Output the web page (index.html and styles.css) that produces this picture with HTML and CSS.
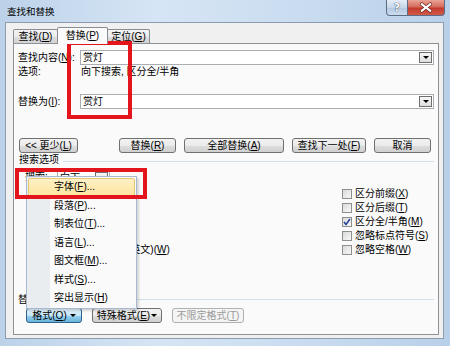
FILE: index.html
```html
<!DOCTYPE html>
<html lang="zh-CN">
<head>
    <meta charset="UTF-8">
    <title>查找和替换</title>
    <link rel="stylesheet" href="styles.css">
</head>
<body>
    <div class="window">
        <div class="titlebar">
            <span class="title">查找和替换</span>
            <div class="caption-buttons">
                <span class="cap-btn help">?</span>
                <span class="cap-btn close">
                    <svg width="37" height="16" viewBox="0 0 37 16">
                        <path d="M14 4 L23 11 M23 4 L14 11" stroke="#6b2118" stroke-width="3.6" stroke-linecap="round"/>
                        <path d="M14 4 L23 11 M23 4 L14 11" stroke="#fff" stroke-width="2.2" stroke-linecap="round"/>
                    </svg>
                </span>
            </div>
        </div>

        <div class="client">
            <div class="tabs">
                <div class="tab tab-find"><span>查找(<u>D</u>)</span></div>
                <div class="tab active"><span>替换(<u>P</u>)</span></div>
                <div class="tab tab-goto"><span>定位(<u>G</u>)</span></div>
            </div>

            <div class="panel">
                <div class="field-row find-row">
                    <span class="field-label">查找内容(<u>N</u>):</span>
                    <div class="combo">
                        <span class="combo-text">赏灯</span>
                        <span class="combo-btn"><i class="tri"></i></span>
                    </div>
                </div>
                <div class="info-row">
                    <span class="info-label">选项:</span>
                    <span>向下搜索, 区分全/半角</span>
                </div>
                <div class="field-row replace-row">
                    <span class="field-label">替换为(<u>I</u>):</span>
                    <div class="combo">
                        <span class="combo-text">赏灯</span>
                        <span class="combo-btn"><i class="tri"></i></span>
                    </div>
                </div>

                <div class="button-row">
                    <span class="btn btn-less"><span>&lt;&lt; 更少(<u>L</u>)</span></span>
                    <span class="btn btn-replace"><span>替换(<u>R</u>)</span></span>
                    <span class="btn btn-all"><span>全部替换(<u>A</u>)</span></span>
                    <span class="btn btn-next"><span>查找下一处(<u>F</u>)</span></span>
                    <span class="btn btn-cancel"><span>取消</span></span>
                </div>

                <div class="group-head search-head">
                    <span>搜索选项</span>
                    <span class="rule"></span>
                </div>
                <div class="search-row">
                    <span class="search-label">搜索:</span>
                    <div class="combo small">
                        <span class="combo-text">向下</span>
                        <span class="combo-btn"><i class="tri"></i></span>
                    </div>
                </div>

                <div class="options">
                    <span></span>
                    <label class="check"><span class="box"></span><span>区分前缀(<u>X</u>)</span></label>
                    <span></span>
                    <label class="check"><span class="box"></span><span>区分后缀(<u>T</u>)</span></label>
                    <span></span>
                    <label class="check"><span class="box"><svg width="8" height="8" viewBox="0 0 8 8"><path d="M1 4 L3 6.5 L7 1" fill="none" stroke="#22409a" stroke-width="1.5"/></svg></span><span>区分全/半角(<u>M</u>)</span></label>
                    <span></span>
                    <label class="check"><span class="box"></span><span>忽略标点符号(<u>S</u>)</span></label>
                    <label class="check left"><span class="box"></span><span>查找单词的所有形式(英文)(<u>W</u>)</span></label>
                    <label class="check"><span class="box"></span><span>忽略空格(<u>W</u>)</span></label>
                </div>

                <div class="group-head replace-head">
                    <span>替换</span>
                    <span class="rule"></span>
                </div>
                <div class="button-row bottom-row">
                    <span class="btn btn-format pressed"><span>格式(<u>O</u>)</span><i class="tri"></i></span>
                    <span class="btn btn-special"><span>特殊格式(<u>E</u>)</span><i class="tri"></i></span>
                    <span class="btn btn-plain disabled"><span>不限定格式(<u>T</u>)</span></span>
                </div>
            </div>
        </div>

        <!-- dropdown menu of the 格式 button -->
        <div class="menu">
            <div class="menu-item hot">字体(<u>F</u>)...</div>
            <div class="menu-item">段落(<u>P</u>)...</div>
            <div class="menu-item">制表位(<u>T</u>)...</div>
            <div class="menu-item">语言(<u>L</u>)...</div>
            <div class="menu-item">图文框(<u>M</u>)...</div>
            <div class="menu-item">样式(<u>S</u>)...</div>
            <div class="menu-item">突出显示(<u>H</u>)</div>
        </div>

        <!-- red annotation frames -->
        <div class="mark mark-fields"></div>
        <div class="mark mark-font"></div>
    </div>
</body>
</html>
```

FILE: styles.css
```css
* {
    box-sizing: border-box;
}

body {
    margin: 0;
    width: 450px;
    height: 346px;
    overflow: hidden;
    font-family: "Liberation Sans", "Noto Sans CJK SC", sans-serif;
    font-size: 10px;
    color: #000;
}

.window {
    position: relative;
    width: 450px;
    height: 346px;
    background: linear-gradient(to right, #bcd2e9 0%, #d6e5f5 35%, #c8dbef 70%, #b9d0e9 100%);
}

.titlebar {
    height: 22px;
    display: flex;
    justify-content: space-between;
    align-items: flex-start;
    padding: 0 5px 0 7px;
}

.title {
    line-height: 23px;
    font-size: 9.5px;
}

.caption-buttons {
    display: flex;
}

.cap-btn {
    height: 16px;
    display: flex;
    align-items: center;
    justify-content: center;
    border: 1px solid #5b6c84;
    border-top: none;
}

.help {
    width: 22px;
    border-radius: 0 0 0 4px;
    background: linear-gradient(#e6eef8, #c6d7ea 50%, #b2c7df 51%, #cddcee);
    color: #fff;
    font: bold 11px "DejaVu Sans", sans-serif;
    text-shadow: 0 0 1px #34465e, 0 0 1px #34465e;
}

.close {
    width: 37px;
    border-left: none;
    border-radius: 0 0 4px 0;
    background: linear-gradient(#e9a396, #d4685a 48%, #c2392a 52%, #d35a4b);
}

.client {
    margin-left: 5px;
    width: 439px;
    height: 317px;
    background: #f0f0f0;
    border: 1px solid #8d9db0;
}

.tabs {
    height: 20px;
    display: flex;
    align-items: flex-end;
    padding-left: 7px;
}

.tab {
    height: 14px;
    display: flex;
    justify-content: center;
    line-height: 13px;
    border: 1px solid #898c95;
    border-bottom: none;
    border-radius: 2px 2px 0 0;
    background: linear-gradient(#f3f3f3, #ebebeb 50%, #dedede 51%, #d3d3d3);
    white-space: nowrap;
}

.tab-find {
    width: 45px;
}

.tab-goto {
    width: 43px;
}

.tab.active {
    position: relative;
    z-index: 1;
    width: 51px;
    height: 17px;
    margin: 0 -1px -1px -1px;
    line-height: 15px;
    background: #fafafa;
}

.panel {
    margin-left: 7px;
    width: 426px;
    height: 292px;
    border: 1px solid #8e9297;
    background: #fafafa;
    padding: 0 4px;
}

.field-row {
    height: 15px;
    display: flex;
    align-items: center;
}

.find-row {
    margin-top: 6px;
}

.replace-row {
    margin-top: 16px;
}

.field-label {
    width: 62px;
    flex: none;
    line-height: 15px;
    white-space: nowrap;
}

.combo {
    flex: 1;
    height: 15px;
    display: flex;
    align-items: center;
    justify-content: space-between;
    padding-left: 2px;
    border: 1px solid #abadb3;
    background: #fff;
    line-height: 13px;
}

.combo-btn {
    width: 13px;
    height: 11px;
    margin-right: 1px;
    display: flex;
    align-items: center;
    justify-content: center;
    border: 1px solid #6f6f6f;
    background: linear-gradient(#f7f7f7, #dedede);
}

.tri {
    display: inline-block;
    width: 0;
    height: 0;
    border-left: 3px solid transparent;
    border-right: 3px solid transparent;
    border-top: 3px solid #000;
}

.info-row {
    height: 13px;
    line-height: 13px;
    display: flex;
    white-space: nowrap;
}

.info-label {
    width: 63px;
    flex: none;
}

.button-row {
    margin-top: 29px;
    height: 15px;
    display: flex;
    gap: 8px;
    padding-left: 1px;
}

.btn {
    height: 15px;
    display: flex;
    align-items: center;
    justify-content: center;
    border: 1px solid #707070;
    border-radius: 3px;
    background: linear-gradient(#f2f2f2, #ebebeb 50%, #dddddd 51%, #d0d0d0);
    line-height: 13px;
    white-space: nowrap;
}

.btn .tri {
    margin-left: 3px;
}

.btn-less { width: 59px; }
.btn-replace { width: 57px; margin-left: 33px; }
.btn-all { width: 100px; }
.btn-next { width: 74px; }
.btn-cancel { width: 57px; }

.group-head {
    height: 13px;
    display: flex;
    align-items: center;
    line-height: 13px;
    white-space: nowrap;
}

.group-head .rule {
    flex: 1;
    height: 1px;
    margin-left: 4px;
    background: #d5dfe7;
}

.search-head {
    padding-left: 1px;
}

.search-head .rule {
    margin-top: 3px;
}

.replace-head {
    margin-top: 35px;
    height: 14px;
}

.search-row {
    margin-top: 4px;
    height: 14px;
    display: flex;
    align-items: center;
    padding-left: 7px;
    line-height: 12px;
}

.search-label {
    width: 32px;
    flex: none;
}

.combo.small {
    flex: none;
    width: 53px;
    height: 14px;
}

.options {
    margin-top: 3px;
    display: grid;
    grid-template-columns: 1fr 92px;
    grid-auto-rows: 14px;
}

.check {
    display: flex;
    align-items: center;
    line-height: 14px;
    white-space: nowrap;
}

.check .box {
    margin-right: 3px;
}

.check.left {
    padding-left: 9px;
}

.check.left .box {
    margin-right: 0;
}

.box {
    width: 10px;
    height: 10px;
    flex: none;
    display: flex;
    align-items: center;
    justify-content: center;
    border: 1px solid #8f8f8f;
    background: linear-gradient(135deg, #d9d9d9, #f9f9f9);
}

.bottom-row {
    margin-top: 2px;
    gap: 10px;
    padding-left: 8px;
}

.btn-format { width: 56px; }
.btn-special { width: 70px; }
.btn-special .tri { margin-left: 1px; }
.btn-plain { width: 72px; }

.btn.pressed {
    border-color: #2c628b;
    background: linear-gradient(#e5f4fc, #c4e5f6 50%, #98d1ef 51%, #68b3db);
}

.btn.disabled {
    border-color: #adb2b5;
    background: #f4f4f4;
    color: #9a9a9a;
}

.menu {
    position: absolute;
    left: 26px;
    top: 176px;
    width: 111px;
    height: 133px;
    padding: 1px;
    border: 1px solid #a7b8d0;
    background: linear-gradient(to right, #e9edf0 0 23px, #fafafa 23px);
    box-shadow: 2px 2px 2px rgba(0, 0, 0, 0.15);
}

.menu-item {
    height: 18.5px;
    line-height: 18px;
    padding-left: 26px;
    white-space: nowrap;
}

.menu-item.hot {
    border: 1px solid #e8c672;
    border-radius: 2px;
    background: linear-gradient(#fff0c4, #fde59f);
    line-height: 16px;
    padding-left: 25px;
}

.mark {
    position: absolute;
    border: 4px solid #e3141c;
}

.mark-fields {
    left: 67px;
    top: 41px;
    width: 65px;
    height: 78px;
}

.mark-font {
    left: 15px;
    top: 168px;
    width: 132px;
    height: 31px;
}
```
